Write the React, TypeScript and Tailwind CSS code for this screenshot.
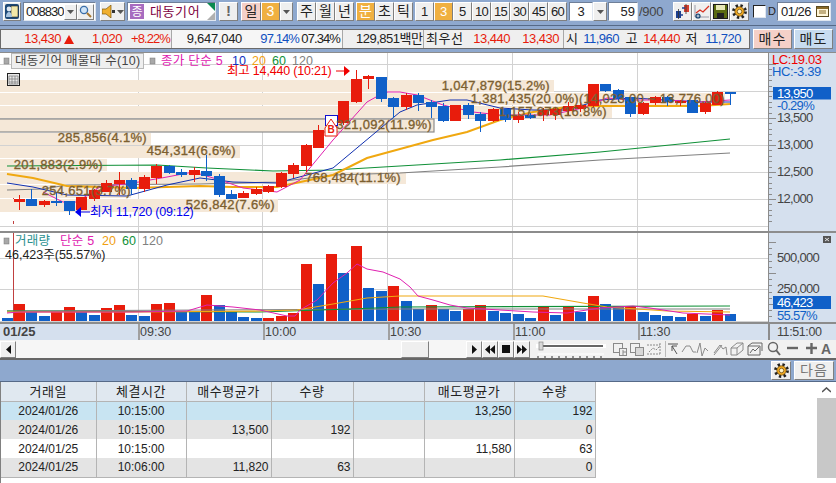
import React from "react";

type Candle = [number, number, number, number, number]; // up(1)/down(0), high, top, bottom, low

const candles: Candle[] = [
  [1, 195, 199, 202, 210], [0, 189, 199, 206, 206], [1, 200, 201, 205, 207], [0, 192, 201, 203, 206],
  [0, 201, 201, 211, 215], [1, 197, 197, 210, 210], [1, 189, 190, 199, 201], [1, 180, 183, 192, 192],
  [1, 172, 180, 184, 195], [0, 178, 180, 189, 195], [1, 175, 177, 189, 192], [1, 164, 166, 178, 184],
  [0, 165, 166, 173, 174], [0, 169, 172, 175, 177], [1, 167, 170, 175, 182], [0, 155, 171, 176, 181],
  [0, 174, 176, 195, 197], [0, 190, 194, 199, 199], [1, 191, 193, 198, 198], [1, 187, 189, 194, 195],
  [1, 185, 186, 192, 193], [1, 172, 173, 187, 188], [1, 163, 165, 174, 178], [1, 144, 145, 166, 172],
  [1, 125, 130, 148, 148], [1, 115, 118, 131, 135], [1, 101, 101, 123, 125], [1, 70, 79, 102, 103],
  [1, 75, 76, 79, 89], [0, 77, 77, 99, 102], [0, 97, 98, 107, 118], [1, 93, 95, 107, 110],
  [0, 93, 95, 103, 111], [0, 100, 102, 107, 118], [0, 103, 106, 121, 122], [1, 105, 105, 121, 121],
  [0, 103, 105, 115, 119], [0, 112, 114, 121, 132], [1, 108, 109, 121, 122], [0, 108, 109, 120, 122],
  [1, 112, 116, 120, 123], [0, 113, 115, 118, 119], [1, 108, 110, 115, 121], [1, 107, 109, 115, 120],
  [1, 102, 106, 111, 115], [1, 102, 105, 109, 112], [1, 84, 84, 106, 107], [0, 84, 84, 91, 92],
  [0, 89, 90, 99, 102], [0, 97, 97, 114, 117], [1, 102, 103, 114, 115], [1, 96, 97, 103, 105],
  [0, 96, 97, 102, 106], [1, 100, 101, 103, 106], [0, 100, 100, 113, 113], [1, 102, 103, 112, 114],
  [1, 91, 92, 105, 105], [0, 92, 92, 94, 105],
];

// volume bars start one slot before the first candle
const volumes: [number, number][] = [
  [0, 318], [1, 304], [0, 312], [0, 316], [1, 312], [1, 307], [0, 312], [0, 315], [1, 308], [1, 305],
  [0, 315], [0, 316], [1, 304], [1, 303], [0, 312], [0, 312], [1, 295], [0, 305], [0, 312], [0, 317],
  [0, 318], [1, 318], [1, 316], [1, 313], [1, 264], [0, 284], [1, 254], [0, 273], [1, 246], [0, 288],
  [0, 291], [1, 286], [0, 301], [0, 309], [1, 305], [0, 309], [0, 311], [1, 309], [1, 305], [0, 311],
  [0, 313], [0, 314], [0, 318], [1, 307], [0, 315], [1, 307], [0, 312], [1, 296], [0, 304], [0, 306],
  [1, 306], [0, 312], [0, 315], [0, 316], [0, 317], [1, 314], [0, 316], [1, 310], [0, 314],
];

const slotX = (i: number) => Math.round(19 + 12.47 * i);

const ma5 = "43,192 63,202 77,202 100,187 133,183 167,177 193,172 220,180 243,188 277,192 300,180 333,140 367,102 385,92 400,92 417,95 443,105 473,112 500,115 550,115 583,108 607,98 633,100 667,100 700,102 730,100";
const ma10 = "7,183 33,187 67,195 127,196 167,185 200,178 233,182 277,183 333,168 400,112 417,105 450,100 467,100 500,108 533,110 567,110 600,100 633,98 667,100 700,102 730,102";
const ma20 = "7,174 33,178 67,186 133,188 200,186 233,187 277,187 333,175 367,158 400,149 433,140 467,132 500,120 533,112 567,107 600,106 633,106 700,106 730,104";
const ma60 = "7,166 157,165 207,168 273,171 333,170 400,166 500,160 600,152 730,139";
const ma120 = "7,190 43,189 67,185 200,184 277,182 333,175 400,173 500,167 600,160 730,153";

const volMa5 = "7,313 20,312 133,312 187,311 207,305 233,307 260,310 287,316 295,316 300,310 317,300 333,283 347,273 357,264 367,269 383,272 400,279 410,287 418,296 433,300 450,305 467,308 500,310 533,312 567,313 600,308 633,306 650,308 683,313 730,315";
const volMa20 = "7,312 133,312 260,311 297,310 333,304 367,298 400,296 543,296 583,303 607,307 667,311 730,312";
const volMa60 = "7,311 260,312 350,309 400,307 730,306";
const volMa120 = "7,311 400,309 730,309";

const bands: [number, number, number][] = [
  [80, 12, 554], [93, 12, 725], [106, 12, 612], [119, 13, 434], [133, 12, 151],
  [146, 12, 240], [159, 12, 107], [172, 12, 406], [185, 13, 131], [199, 13, 278],
];

const bandLabels: [number, number, string][] = [
  [550, 90, "1,047,879(15.2%)"],
  [725, 103, "1,381,435(20.0%)(14,023.00 ~ 13,776.00)"],
  [607, 116, "1,157,873(16.8%)"],
  [432, 129, "321,092(11.9%)"],
  [147, 142, "285,856(4.1%)"],
  [236, 155, "454,314(6.6%)"],
  [103, 169, "201,883(2.9%)"],
  [401, 182, "768,484(11.1%)"],
  [131, 195, "254,651(3.7%)"],
  [275, 209, "526,842(7.6%)"],
];

const gridX = [138.5, 262.5, 387.5, 512.5, 637.5];

const raisedBtn =
  "flex shrink-0 items-center justify-center h-[19px] bg-[#efefef] border border-t-white border-l-white border-r-[#7f7f7f] border-b-[#7f7f7f] text-[14px] text-[#222]";
const sunkenBox =
  "flex shrink-0 items-center h-[19px] bg-white border border-t-[#6f7f98] border-l-[#6f7f98] border-r-[#dfe6f0] border-b-[#dfe6f0] text-[14px] text-[#222]";
const axisText = { fontSize: 13, letterSpacing: -0.7 };

function Caret() {
  return (
    <svg width="7" height="4" viewBox="0 0 7 4">
      <path d="M0 0h7L3.5 4z" fill="#555" />
    </svg>
  );
}

function GearIcon() {
  return (
    <svg width="15" height="15" viewBox="0 0 16 16">
      <circle cx="8" cy="8" r="6.2" fill="none" stroke="#222" strokeWidth="3.4" strokeDasharray="2.4 2.5" />
      <circle cx="8" cy="8" r="5" fill="#f0a820" stroke="#6a4a10" strokeWidth="0.8" />
      <circle cx="8" cy="8" r="2.4" fill="#fff3c8" stroke="#6a4a10" strokeWidth="0.8" />
    </svg>
  );
}

function TopToolbar() {
  return (
    <div className="flex items-center h-[26px] pl-[3px] pb-[2px] bg-[#8ea8ce] border-b border-[#566a88]">
      <div className={`${raisedBtn} w-[18px]`}>
        <svg width="14" height="15" viewBox="0 0 14 15">
          <rect x="0" y="0" width="14" height="15" rx="2" fill="#1f4a78" />
          <rect x="6" y="2" width="7" height="11" fill="#f2e7a8" stroke="#222" strokeWidth="0.6" />
          <circle cx="4" cy="5" r="2.4" fill="#dfe8f2" />
          <path d="M1 13c0-4 2-5 3-5s3 1 3 5z" fill="#a8c4e0" />
        </svg>
      </div>
      <div className={`${sunkenBox} w-[73px] ml-[2px] pl-[2px]`}>
        <span className="w-[38px] text-[13px] tracking-[-1px]">008830</span>
        <div className={`${raisedBtn} w-[13px] !h-[16px]`}>
          <Caret />
        </div>
        <div className={`${raisedBtn} w-[17px] !h-[16px]`}>
          <svg width="13" height="13" viewBox="0 0 13 13">
            <circle cx="5" cy="5" r="3.6" fill="#cfe4f8" stroke="#3a6ea8" strokeWidth="1.3" />
            <path d="M8 8l4 4" stroke="#a87830" strokeWidth="2" />
          </svg>
        </div>
      </div>
      <div className={`${raisedBtn} w-[25px] ml-[4px] gap-[2px]`}>
        <svg width="13" height="13" viewBox="0 0 13 13">
          <path d="M0 4h4l5-4v13l-5-4H0z" fill="#f0b030" stroke="#7a5810" strokeWidth="0.7" />
          <rect x="10" y="5" width="3" height="3" fill="#333" />
        </svg>
        <Caret />
      </div>
      <div className={`${sunkenBox} relative w-[89px] ml-[2px] pl-[2px] overflow-hidden`}>
        <span className="flex items-center justify-center w-[14px] h-[15px] bg-[#a86cc0] text-white text-[12px]">종</span>
        <span className="ml-[6px] text-[#800040] text-[13px] tracking-[0.6px]">대동기어</span>
        <span className="absolute right-0 top-0 border-t-[8px] border-l-[8px] border-t-[#0a8a50] border-l-transparent" />
        <span className="absolute right-0 bottom-0 border-b-[8px] border-l-[8px] border-b-[#b0b0b0] border-l-transparent" />
      </div>
      <div className={`${raisedBtn} w-[19px] ml-[3px] font-bold !text-[#666] !text-[15px]`}>!</div>
      <div className={`${raisedBtn} w-[20px] ml-[3px] !bg-[#f5d0c8]`}>일</div>
      <div className={`${raisedBtn} w-[19px] !bg-[#f0b040] !text-white`}>3</div>
      <div className={`${raisedBtn} w-[13px]`}>
        <Caret />
      </div>
      <div className={`${raisedBtn} w-[19px] ml-[4px]`}>주</div>
      <div className={`${raisedBtn} w-[19px]`}>월</div>
      <div className={`${raisedBtn} w-[19px]`}>년</div>
      <div className={`${raisedBtn} w-[19px] ml-[2px] !bg-[#f0b040] !text-white`}>분</div>
      <div className={`${raisedBtn} w-[19px]`}>초</div>
      <div className={`${raisedBtn} w-[19px]`}>틱</div>
      <div className={`${raisedBtn} w-[19px] ml-[2px] !text-[13px]`}>1</div>
      <div className={`${raisedBtn} w-[19px] !bg-[#f0b040] !text-white !text-[13px]`}>3</div>
      <div className={`${raisedBtn} w-[19px] !text-[13px]`}>5</div>
      <div className={`${raisedBtn} w-[19px] !text-[13px] tracking-[-0.7px]`}>10</div>
      <div className={`${raisedBtn} w-[19px] !text-[13px] tracking-[-0.7px]`}>15</div>
      <div className={`${raisedBtn} w-[19px] !text-[13px] tracking-[-0.7px]`}>30</div>
      <div className={`${raisedBtn} w-[19px] !text-[13px] tracking-[-0.7px]`}>45</div>
      <div className={`${raisedBtn} w-[19px] !text-[13px] tracking-[-0.7px]`}>60</div>
      <div className={`${sunkenBox} w-[24px] ml-[2px] justify-center !text-[13px]`}>3</div>
      <div className={`${raisedBtn} w-[14px]`}>
        <Caret />
      </div>
      <div className={`${sunkenBox} w-[30px] ml-px justify-end pr-[2px] !text-[13px]`}>59</div>
      <span className="w-[35px] shrink-0 pl-px text-[13px] text-[#444] tracking-[-0.3px]">/900</span>
      <div className={`${raisedBtn} w-[19px]`}>
        <svg width="15" height="15" viewBox="0 0 15 15">
          <rect x="9" y="1" width="5" height="7" fill="#d84030" />
          <rect x="1" y="7" width="5" height="7" fill="#1c3f90" />
          <path d="M7 4h3M8 11h-3" stroke="#1c3f90" strokeWidth="1.5" />
          <path d="M11 0v10M3.500 5v10" stroke="#333" strokeWidth="0.8" />
        </svg>
      </div>
      <div className={`${raisedBtn} w-[19px]`}>
        <svg width="16" height="15" viewBox="0 0 16 15">
          <path d="M1 1v12h14" stroke="#889" strokeWidth="0.8" fill="none" />
          <path d="M2 9l4-3 3 2 6-6" stroke="#d83020" strokeWidth="1.3" fill="none" />
          <circle cx="4" cy="12" r="2.6" fill="#15406e" />
          <path d="M2.500 12h3M4 10.500v3" stroke="#fff" strokeWidth="0.8" />
        </svg>
      </div>
      <div className={`${raisedBtn} w-[19px]`}>
        <svg width="15" height="15" viewBox="0 0 15 15">
          <rect x="0.500" y="0.500" width="14" height="14" fill="#5a6a10" stroke="#1c1c1c" />
          <rect x="3" y="1" width="9" height="5" fill="#e8e8b8" />
          <rect x="4" y="9" width="7" height="5" fill="#222" />
        </svg>
      </div>
      <div className={`${raisedBtn} w-[19px]`}>
        <GearIcon />
      </div>
      <div className="w-[13px] h-[13px] shrink-0 ml-[4px] bg-white border border-t-[#222] border-l-[#222] border-r-[#dfe6f0] border-b-[#dfe6f0]" />
      <span className="w-[9px] shrink-0 ml-[2px] text-[11px] text-[#222]">D</span>
      <div className={`${sunkenBox} w-[54px] pl-[3px] !text-[13px] justify-between pr-px tracking-[-0.5px]`}>
        <span>01/26</span>
        <svg width="13" height="13" viewBox="0 0 13 13">
          <rect x="0.500" y="1.500" width="12" height="10" fill="#fff6d8" stroke="#5a4a20" />
          <rect x="1" y="2" width="11" height="2" fill="#8a6a28" />
          <path d="M3 6h7M3 8h7" stroke="#8a6a28" />
        </svg>
      </div>
    </div>
  );
}

function QuoteRow() {
  return (
    <div className="flex h-[26px] pt-[3px] bg-[#8ea8ce]">
      <div className="flex items-center h-[20px] w-[750px] bg-[#efefef] border border-[#6a6a6a] text-[13px] text-[#222] whitespace-nowrap tracking-[-0.5px]">
        <div className="flex items-center w-[171px] text-[#e81c0c] border-r border-[#a8a8a8] h-full">
          <span className="w-[60px] text-right">13,430</span>
          <svg className="ml-[3px]" width="10" height="9" viewBox="0 0 10 9">
            <path d="M5 0l5 9H0z" fill="#e81c0c" />
          </svg>
          <span className="w-[48px] text-right">1,020</span>
          <span className="w-[48px] text-right tracking-[-0.9px]">+8.22%</span>
        </div>
        <div className="flex items-center w-[171px] h-full border-r border-[#a8a8a8] bg-[#f6f6f6]">
          <span className="w-[70px] text-right tracking-[-0.3px]">9,647,040</span>
          <span className="w-[57px] text-right text-[#1050c0] tracking-[-0.9px]">97.14%</span>
          <span className="w-[41px] text-right tracking-[-0.9px]">07.34%</span>
        </div>
        <div className="flex items-center w-[81px] h-full border-r border-[#a8a8a8] pl-[13px] overflow-hidden">
          129,851백만
        </div>
        <div className="flex items-center w-[140px] h-full border-r border-[#a8a8a8] pl-[2px]">
          <span className="w-[38px] tracking-[0.5px]">최우선</span>
          <span className="w-[46px] text-right text-[#e81c0c]">13,440</span>
          <span className="w-[49px] text-right text-[#e81c0c]">13,430</span>
        </div>
        <div className="flex items-center h-full pl-[2px]">
          <span className="w-[12px]">시</span>
          <span className="w-[41px] text-right text-[#1050c0]">11,960</span>
          <span className="w-[18px] text-right">고</span>
          <span className="w-[43px] text-right text-[#e81c0c]">14,440</span>
          <span className="w-[17px] text-right">저</span>
          <span className="w-[44px] text-right text-[#1050c0]">11,720</span>
        </div>
      </div>
      <div className={`${raisedBtn} !h-[20px] w-[39px] ml-[3px] !bg-[#f5d0c8] tracking-[1px]`}>매수</div>
      <div className={`${raisedBtn} !h-[20px] w-[39px] ml-[2px] !bg-[#c8dcf0] tracking-[1px]`}>매도</div>
    </div>
  );
}

function Grid({ ys, top, bottom }: { ys: number[]; top: number; bottom: number }) {
  return (
    <g stroke="#d2d2d2" strokeWidth="1">
      {ys.map((y) => (
        <line key={y} x1="0" x2="768" y1={y + 0.5} y2={y + 0.5} />
      ))}
      {gridX.map((x) => (
        <line key={x} x1={x} x2={x} y1={top} y2={bottom} />
      ))}
    </g>
  );
}

function CandlePlot() {
  return (
    <svg className="block" width="768" height="178" viewBox="0 53 768 178">
      <Grid ys={[64, 91, 118, 145, 172, 199, 226]} top={53} bottom={231} />
      <line x1="13.500" x2="13.500" y1="53" y2="231" stroke="#c04040" strokeDasharray="3 9" />
      {bands.map(([y, h, w]) => (
        <rect key={y} x="0" y={y} width={w} height={h} fill="#f5e8d8" />
      ))}
      <rect x="-2" y="119" width="436" height="13" fill="none" stroke="#8c8c8c" strokeWidth="1.200" />
      <polyline points={ma120} fill="none" stroke="#808080" strokeWidth="1.200" />
      <polyline points={ma60} fill="none" stroke="#109038" strokeWidth="1.200" />
      <polyline points={ma20} fill="none" stroke="#f0a810" strokeWidth="2" />
      <polyline points={ma10} fill="none" stroke="#1030b0" strokeWidth="1" />
      <polyline points={ma5} fill="none" stroke="#e020b0" strokeWidth="1" />
      {candles.map(([up, high, top, bottom, low], i) => {
        const x = slotX(i);
        const color = up ? "#e81c0c" : "#1060c8";
        return (
          <g key={i}>
            <rect x={x} y={high} width="1" height={low - high} fill={color} />
            <rect x={x - 5} y={top} width="11" height={bottom - top} fill={color} />
          </g>
        );
      })}
      {/* buy marker */}
      <rect x="325.500" y="115.500" width="12" height="10" fill="#fff" stroke="#1010d0" />
      <path d="M325 128l6-9 6 9v8h-12z" fill="#fff" stroke="#e81c0c" />
      <text x="331" y="133" textAnchor="middle" fontSize="10" fontWeight="700" fill="#e81c0c">B</text>
      {bandLabels.map(([x, y, label]) => (
        <text key={label} x={x} y={y} textAnchor="end" fontSize="13" letterSpacing="0.3" fill="#7c5f30" stroke="#7c5f30" strokeWidth="0.35">
          {label}
        </text>
      ))}
      {/* high and low callouts */}
      <text x="227" y="75" fontSize="12.500" letterSpacing="-0.2" fill="#f00000">최고 14,440 (10:21)</text>
      <path d="M336 71h8" stroke="#f00000" />
      <path d="M344 66l6 5-6 5z" fill="#f00000" />
      <path d="M75 212l6-5v10z" fill="#0000f0" />
      <path d="M81 212h9" stroke="#0000f0" />
      <text x="90" y="216" fontSize="12.500" letterSpacing="-0.2" fill="#0000f0">최저 11,720 (09:12)</text>
      {/* table toggle */}
      <rect x="7.500" y="73.500" width="12" height="12" fill="#e8e8e8" stroke="#222" />
      <path d="M9 76h9v8h-9zM12 76v8M15 76v8M9 79h9M9 82h9" fill="none" stroke="#777" strokeWidth="0.7" />
      {/* legend */}
      <rect x="4" y="58" width="5" height="6" fill="#a8a8a8" stroke="#777" strokeWidth="0.5" />
      <rect x="11.500" y="53.500" width="132" height="15" fill="#efefef" stroke="#b8b8b8" />
      <text x="15" y="65" fontSize="12.500" fill="#444" letterSpacing="0.3">대동기어 매물대 수(10)</text>
      <rect x="150" y="58" width="5" height="6" fill="#a8a8a8" stroke="#777" strokeWidth="0.5" />
      <text x="161" y="65" fontSize="12.500" fill="#e020b0" letterSpacing="0.3">종가 단순 5</text>
      <text x="232" y="65" fontSize="12.500" fill="#1030c0">10</text>
      <text x="252" y="65" fontSize="12.500" fill="#f0a010">20</text>
      <text x="272" y="65" fontSize="12.500" fill="#109038">60</text>
      <text x="292" y="65" fontSize="12.500" fill="#808080">120</text>
    </svg>
  );
}

function VolumePlot() {
  return (
    <svg className="block" width="768" height="89" viewBox="0 233 768 89">
      <Grid ys={[258, 289]} top={233} bottom={322} />
      <line x1="13.500" x2="13.500" y1="233" y2="322" stroke="#c04040" />
      {volumes.map(([up, top], i) => (
        <rect key={i} x={slotX(i - 1) - 5} y={top} width="11" height={321 - top} fill={up ? "#e81c0c" : "#1060c8"} />
      ))}
      <polyline points={volMa120} fill="none" stroke="#808080" strokeWidth="1.200" />
      <polyline points={volMa60} fill="none" stroke="#109038" strokeWidth="1.200" />
      <polyline points={volMa20} fill="none" stroke="#f0a810" strokeWidth="1.200" />
      <polyline points={volMa5} fill="none" stroke="#e020b0" strokeWidth="1" />
      <line x1="0" x2="768" y1="321.500" y2="321.500" stroke="#d2d2d2" />
      <rect x="4" y="238" width="5" height="6" fill="#a8a8a8" stroke="#777" strokeWidth="0.5" />
      <text x="15" y="245" fontSize="12.500" fill="#2a9090" letterSpacing="0.3">거래량</text>
      <text x="60" y="245" fontSize="12.500" fill="#e020b0" letterSpacing="0.3">단순 5</text>
      <text x="102" y="245" fontSize="12.500" fill="#f0a010">20</text>
      <text x="122" y="245" fontSize="12.500" fill="#109038">60</text>
      <text x="142" y="245" fontSize="12.500" fill="#808080">120</text>
      <text x="5" y="259" fontSize="12.500" fill="#222">46,423주(55.57%)</text>
    </svg>
  );
}

function Ticks({ y0, y1, step }: { y0: number; y1: number; step: number }) {
  const ys: number[] = [];
  for (let y = y0; y <= y1; y += step) ys.push(y);
  return (
    <g stroke="#8c8c8c">
      {ys.map((y, i) => (
        <line key={y} x1="769" x2={i % 5 === 0 ? 776 : 772} y1={Math.round(y) + 0.5} y2={Math.round(y) + 0.5} />
      ))}
    </g>
  );
}

function PriceAxis() {
  return (
    <svg className="block" width="67" height="178" viewBox="769 53 67 178">
      <Ticks y0={64} y1={226} step={5.4} />
      <text x="772" y="64" fontSize="13" letterSpacing="-0.4" fill="#f00000">LC:19.03</text>
      <text x="772" y="76" fontSize="13" letterSpacing="-0.4" fill="#1060c8">HC:-3.39</text>
      <rect x="773" y="87" width="58" height="12.500" fill="#1060c8" />
      <text x="777" y="98" {...axisText} fill="#fff">13,950</text>
      <text x="777" y="110" {...axisText} fill="#1060c8">-0.29%</text>
      <text x="777" y="122" {...axisText} fill="#444">13,500</text>
      <text x="777" y="149" {...axisText} fill="#444">13,000</text>
      <text x="777" y="176" {...axisText} fill="#444">12,500</text>
      <text x="777" y="203" {...axisText} fill="#444">12,000</text>
    </svg>
  );
}

function VolumeAxis() {
  return (
    <svg className="block" width="67" height="89" viewBox="769 233 67 89">
      <Ticks y0={242} y1={320} step={6.2} />
      <rect x="823" y="236" width="8" height="7" fill="#555" />
      <path d="M825 238l4 3M829 238l-4 3" stroke="#fff" strokeWidth="0.8" />
      <text x="777" y="262" {...axisText} fill="#444">500,000</text>
      <text x="777" y="293" {...axisText} fill="#444">250,000</text>
      <rect x="773" y="296" width="58" height="13" fill="#1060c8" />
      <text x="777" y="307" {...axisText} fill="#fff">46,423</text>
      <text x="777" y="320" {...axisText} fill="#1060c8">55.57%</text>
    </svg>
  );
}

function TimeAxis() {
  return (
    <div className="flex h-[18px] bg-[#d5e0ee] border-t-2 border-[#8c8c8c] text-[12.500px] text-[#444] leading-[16px]">
      <div className="w-[138px] pl-[3px] font-bold text-[13px]">01/25</div>
      <div className="w-[125px] border-l-2 border-[#a0a0a0]">09:30</div>
      <div className="w-[125px] border-l-2 border-[#a0a0a0]">10:00</div>
      <div className="w-[125px] border-l-2 border-[#a0a0a0]">10:30</div>
      <div className="w-[125px] border-l-2 border-[#a0a0a0]">11:00</div>
      <div className="w-[130px] border-l-2 border-[#a0a0a0]">11:30</div>
      <div className="flex-1 pl-[7px] border-l-2 border-[#8c8c8c] tracking-[-0.4px]">11:51:00</div>
    </div>
  );
}

const toolStroke = "#8a8a8a";

function ChartTools() {
  return (
    <svg width="222" height="16" viewBox="0 0 222 16" className="ml-[5px]">
      <g fill="none" stroke={toolStroke}>
        <rect x="0.500" y="2.500" width="9" height="9" />
        <rect x="6.500" y="7.500" width="7" height="7" fill="#efefef" />
        <path d="M10 11h3M10 9v6" />
        <rect x="17.500" y="2.500" width="9" height="9" />
        <rect x="22.500" y="6.500" width="8" height="8" fill="#d8d8d8" />
        <path d="M34 4h13M34 13h13M47 2v11" strokeDasharray="2 1" />
        <path d="M36 11l4-4 3 2 4-4" strokeDasharray="2 1" />
        <path d="M52.500 0v16" stroke="#bbb" />
        <path d="M55 3h10M59 5l5 8M59 5v5M59 5h5" stroke="#555" />
        <path d="M69 11l4-6h4l3 6h3" />
        <path d="M84 12l3-10 2 13 3-8 3 3" />
        <path d="M101 12l6-8 3 4 3-2 1 8M101 14l8-10" />
        <path d="M118 7l6-5h6v7l-6 5h-6zM118 7h6v7M124 7l6-5" />
        <path d="M135 5h12v9h-12zM135 5l4-3h10v8M137 12l3-4 2 2 4-4" stroke="#666" />
        <circle cx="160" cy="6" r="4.500" stroke="#666" strokeWidth="1.400" />
        <path d="M163 9l4 5" stroke="#666" strokeWidth="2" />
      </g>
      <path d="M174 7h11" stroke="#666" strokeWidth="2.400" />
      <path d="M193 7h11M198.500 2v11" stroke="#666" strokeWidth="2.400" />
      <text x="208" y="13" fontSize="14" fontWeight="700" fill="#666">A</text>
    </svg>
  );
}

function ScrollRow() {
  return (
    <div className="flex items-center h-[18px] bg-[#f1f1f1]">
      <div className={`${raisedBtn} w-[16px] !h-[17px]`}>
        <svg width="5" height="9" viewBox="0 0 5 9">
          <path d="M5 0v9L0 4.500z" fill="#111" />
        </svg>
      </div>
      <div className="w-[385px] h-full bg-[#f6f6f6]" />
      <div className={`${raisedBtn} w-[28px] !h-[17px]`} />
      <div className="w-[37px] h-full bg-[#f6f6f6]" />
      <div className={`${raisedBtn} w-[16px] !h-[17px]`}>
        <svg width="5" height="9" viewBox="0 0 5 9">
          <path d="M0 0v9l5-4.500z" fill="#111" />
        </svg>
      </div>
      <div className={`${raisedBtn} w-[16px] !h-[17px]`}>
        <svg width="10" height="9" viewBox="0 0 10 9">
          <path d="M5 0v9L0 4.500zM10 0v9L5 4.500z" fill="#111" />
        </svg>
      </div>
      <div className={`${raisedBtn} w-[16px] !h-[17px]`}>
        <svg width="8" height="8" viewBox="0 0 8 8">
          <rect width="8" height="8" fill="#111" />
        </svg>
      </div>
      <div className={`${raisedBtn} w-[16px] !h-[17px]`}>
        <svg width="10" height="9" viewBox="0 0 10 9">
          <path d="M0 0v9l5-4.500zM5 0v9l5-4.500z" fill="#111" />
        </svg>
      </div>
      <svg width="72" height="17" viewBox="0 0 72 17" className="ml-[6px]">
        <rect x="0" y="3" width="70" height="4" fill="#fff" />
        <rect x="3" y="4" width="64" height="2" fill="#666" />
        <rect x="3" y="1" width="4" height="8" fill="#d8d8d8" stroke="#888" strokeWidth="0.7" />
        <path d="M2 15v2M9 15v2M16 15v2M23 15v2M30 15v2M37 15v2M44 15v2M51 15v2M58 15v2M65 15v2" stroke="#333" />
        <path d="M2 13h66" stroke="#fff" />
      </svg>
      <ChartTools />
    </div>
  );
}

function ActionBar() {
  return (
    <div className="flex items-center justify-end h-[24px] pr-[2px] bg-[#8ea8ce] border-t-2 border-b border-t-[#666] border-b-[#566a88]">
      <div className={`${raisedBtn} w-[20px]`}>
        <GearIcon />
      </div>
      <div className={`${raisedBtn} w-[40px] ml-[3px] !text-[#777] tracking-[1px]`}>다음</div>
    </div>
  );
}

const columns = ["거래일", "체결시간", "매수평균가", "수량", "", "매도평균가", "수량"];

const rows: { bg: string; cells: string[] }[] = [
  { bg: "bg-[#c8e4f2]", cells: ["2024/01/26", "10:15:00", "", "", "", "13,250", "192"] },
  { bg: "bg-[#e4e4e4]", cells: ["2024/01/26", "10:15:00", "13,500", "192", "", "", "0"] },
  { bg: "bg-white", cells: ["2024/01/25", "10:15:00", "", "", "", "11,580", "63"] },
  { bg: "bg-[#e4e4e4]", cells: ["2024/01/25", "10:06:00", "11,820", "63", "", "", "0"] },
];

function TradesTable() {
  return (
    <div className="flex h-[101px] bg-white border-l border-[#808080]">
      <div className="w-[816px]">
        <table className="table-fixed w-[594px] border-collapse text-[12px] leading-none text-[#222]">
          <colgroup>
            <col className="w-[95px]" />
            <col className="w-[90px]" />
            <col className="w-[85px]" />
            <col className="w-[82px]" />
            <col className="w-[71px]" />
            <col className="w-[90px]" />
            <col className="w-[81px]" />
          </colgroup>
          <thead>
            <tr className="h-[19px] bg-[#e0e8f0]">
              {columns.map((c, i) => (
                <th key={i} className="font-normal text-[13px] leading-none tracking-[0.5px] border-r border-b border-[#b4b4b4] p-0">
                  {c}
                </th>
              ))}
            </tr>
          </thead>
          <tbody>
            {rows.map((r, i) => (
              <tr key={i} className={`h-[19px] ${r.bg}`}>
                {r.cells.map((c, j) => (
                  <td
                    key={j}
                    className={`p-0 border-r border-[#b4b4b4] ${i === 3 ? "border-b" : ""} ${
                      j < 2 ? "text-center" : "text-right pr-[2px]"
                    }`}
                  >
                    {c}
                  </td>
                ))}
              </tr>
            ))}
          </tbody>
        </table>
      </div>
      <div className="flex flex-col w-[19px]">
        <div className="flex items-center justify-center h-[16px]">
          <svg width="9" height="6" viewBox="0 0 9 6">
            <path d="M0 5l4.500-4 4.500 4" fill="none" stroke="#555" strokeWidth="1.600" />
          </svg>
        </div>
        <div className="h-[80px] bg-[#c8c8c8]" />
      </div>
    </div>
  );
}

export default function App() {
  return (
    <div className="w-[836px] h-[483px] overflow-hidden bg-white font-['Liberation_Sans','Noto_Sans_CJK_KR',sans-serif]">
      <TopToolbar />
      <QuoteRow />
      <div className="border-t border-[#8c8c8c]">
        <div className="flex h-[180px] border-b-2 border-[#8c8c8c]">
          <div className="w-[768px]">
            <CandlePlot />
          </div>
          <div className="flex-1 bg-[#d5e0ee] border-l border-[#8c8c8c]">
            <PriceAxis />
          </div>
        </div>
        <div className="flex h-[89px]">
          <div className="w-[768px]">
            <VolumePlot />
          </div>
          <div className="flex-1 bg-[#d5e0ee] border-l border-[#8c8c8c]">
            <VolumeAxis />
          </div>
        </div>
      </div>
      <TimeAxis />
      <ScrollRow />
      <ActionBar />
      <TradesTable />
    </div>
  );
}
